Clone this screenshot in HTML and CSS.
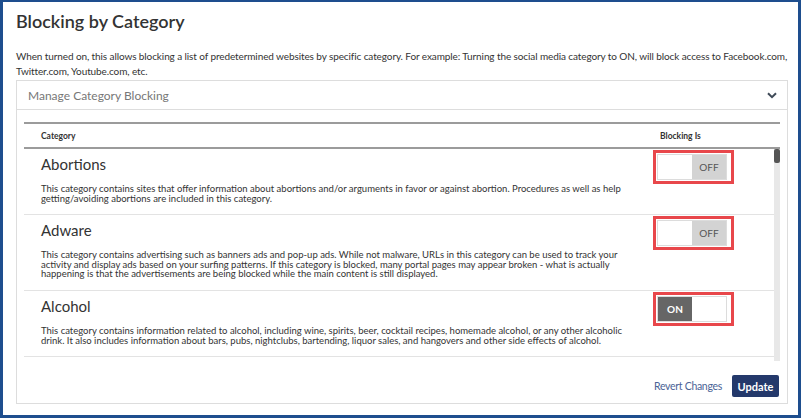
FILE: index.html
```html
<!DOCTYPE html>
<html lang="en">
<head>
<meta charset="utf-8">
<title>Blocking by Category</title>
<link rel="stylesheet" href="styles.css">
</head>
<body>
<div class="frame">
  <h1 class="title">Blocking by Category</h1>
  <p class="intro">When turned on, this allows blocking a list of predetermined websites by specific category. For example: Turning the social media category to ON, will block access to Facebook.com,<br>Twitter.com, Youtube.com, etc.</p>
  <section class="panel">
    <header class="panel-head">
      <span class="panel-title">Manage Category Blocking</span>
      <svg class="chevron" width="10" height="7" viewBox="0 0 10 7"><path d="M1 1.2 L5 5.2 L9 1.2" fill="none" stroke="#3f4a58" stroke-width="2"/></svg>
    </header>
    <div class="panel-body">
      <div class="table-head">
        <span class="th-cat">Category</span>
        <span class="th-block">Blocking Is</span>
      </div>
      <div class="scroll">
        <div class="rows">
          <div class="row">
            <div class="info">
              <h2 class="cat-name">Abortions</h2>
              <p class="cat-desc">This category contains sites that offer information about abortions and/or arguments in favor or against abortion. Procedures as well as help<br>getting/avoiding abortions are included in this category.</p>
            </div>
            <div class="cell">
              <div class="mark">
                <div class="toggle off"><span class="half blank"></span><span class="half state">OFF</span></div>
              </div>
            </div>
          </div>
          <div class="row">
            <div class="info">
              <h2 class="cat-name">Adware</h2>
              <p class="cat-desc">This category contains advertising such as banners ads and pop-up ads. While not malware, URLs in this category can be used to track your<br>activity and display ads based on your surfing patterns. If this category is blocked, many portal pages may appear broken - what is actually<br>happening is that the advertisements are being blocked while the main content is still displayed.</p>
            </div>
            <div class="cell">
              <div class="mark">
                <div class="toggle off"><span class="half blank"></span><span class="half state">OFF</span></div>
              </div>
            </div>
          </div>
          <div class="row">
            <div class="info">
              <h2 class="cat-name">Alcohol</h2>
              <p class="cat-desc">This category contains information related to alcohol, including wine, spirits, beer, cocktail recipes, homemade alcohol, or any other alcoholic<br>drink. It also includes information about bars, pubs, nightclubs, bartending, liquor sales, and hangovers and other side effects of alcohol.</p>
            </div>
            <div class="cell">
              <div class="mark">
                <div class="toggle on"><span class="half state">ON</span><span class="half blank"></span></div>
              </div>
            </div>
          </div>
        </div>
        <div class="scrollbar"><div class="thumb"></div></div>
      </div>
    </div>
    <footer class="panel-foot">
      <a class="revert" href="#">Revert Changes</a>
      <button class="update" type="button">Update</button>
    </footer>
  </section>
</div>
</body>
</html>
```

FILE: styles.css
```css
html, body {
  margin: 0;
  padding: 0;
  background: #ffffff;
}

body {
  font-family: Lato, "Liberation Sans", sans-serif;
  color: #333333;
}

.frame {
  box-sizing: border-box;
  width: 801px;
  height: 418px;
  border-style: solid;
  border-color: #1e4e8e;
  border-width: 2px 3px 3px 3px;
  padding: 7px 10px 0 13px;
  overflow: hidden;
}

.title {
  margin: 0;
  font-size: 18px;
  line-height: 24px;
  font-weight: 600;
  color: #333333;
}

.intro {
  margin: 16px 0 0 0;
  font-size: 10px;
  letter-spacing: -0.1px;
  line-height: 15px;
  color: #333333;
}

.panel {
  box-sizing: border-box;
  width: 772px;
  margin-top: 1px;
  border: 1px solid #dddddd;
}

.panel-head {
  display: flex;
  align-items: center;
  justify-content: space-between;
  height: 28px;
  padding: 0 10px 0 11px;
  border-bottom: 1px solid #dddddd;
}

.panel-title {
  font-size: 12px;
  color: #777777;
}

.chevron {
  display: block;
}

.panel-body {
  padding: 12px 7px 0 7px;
}

.table-head {
  display: flex;
  align-items: center;
  height: 23px;
  border-top: 2px solid #9b9b9b;
  border-bottom: 2px solid #9b9b9b;
  font-size: 8.5px;
  font-weight: 700;
  color: #333333;
}

.th-cat {
  flex: 1;
  padding-left: 17px;
}

.th-block {
  width: 120px;
}

.scroll {
  display: flex;
  height: 212px;
  overflow: hidden;
}

.rows {
  flex: 1;
}

.row {
  display: flex;
  border-bottom: 1px solid #e3e3e3;
}

.info {
  flex: 1;
  padding: 5px 0 11px 17px;
}

.cat-name {
  margin: 0;
  font-size: 15px;
  line-height: 20px;
  font-weight: 400;
  color: #333333;
}

.cat-desc {
  margin: 10px 0 0 0;
  font-size: 9.5px;
  line-height: 9.6px;
  color: #333333;
}

.cell {
  width: 124px;
  padding: 1px 0 0 3px;
  box-sizing: border-box;
}

.mark {
  display: inline-block;
  border: 3px solid #e8474b;
  padding: 1px 4px 1px 1px;
}

.toggle {
  display: flex;
  width: 70px;
  height: 26px;
  box-sizing: border-box;
  border: 1px solid #dcdcdc;
}

.half {
  flex: 1;
  display: flex;
  align-items: center;
  justify-content: center;
  font-size: 10px;
}

.toggle.off .state {
  background: #d3d3d3;
  color: #555555;
}

.toggle.on .state {
  background: #666666;
  color: #ffffff;
  font-weight: 700;
}

.scrollbar {
  width: 6px;
  background: #e8e8e8;
}

.thumb {
  height: 14px;
  background: #555555;
  border-radius: 2px;
}

.panel-foot {
  display: flex;
  justify-content: flex-end;
  align-items: center;
  gap: 10px;
  padding: 14px 8px 6px 0;
}

.revert {
  font-size: 10.5px;
  letter-spacing: -0.3px;
  color: #4a6396;
  text-decoration: none;
}

.update {
  width: 47px;
  height: 22px;
  padding: 0;
  border: none;
  border-radius: 2px;
  background: #24396b;
  color: #ffffff;
  font-family: Lato, "Liberation Sans", sans-serif;
  font-size: 11px;
  font-weight: 700;
}
```
